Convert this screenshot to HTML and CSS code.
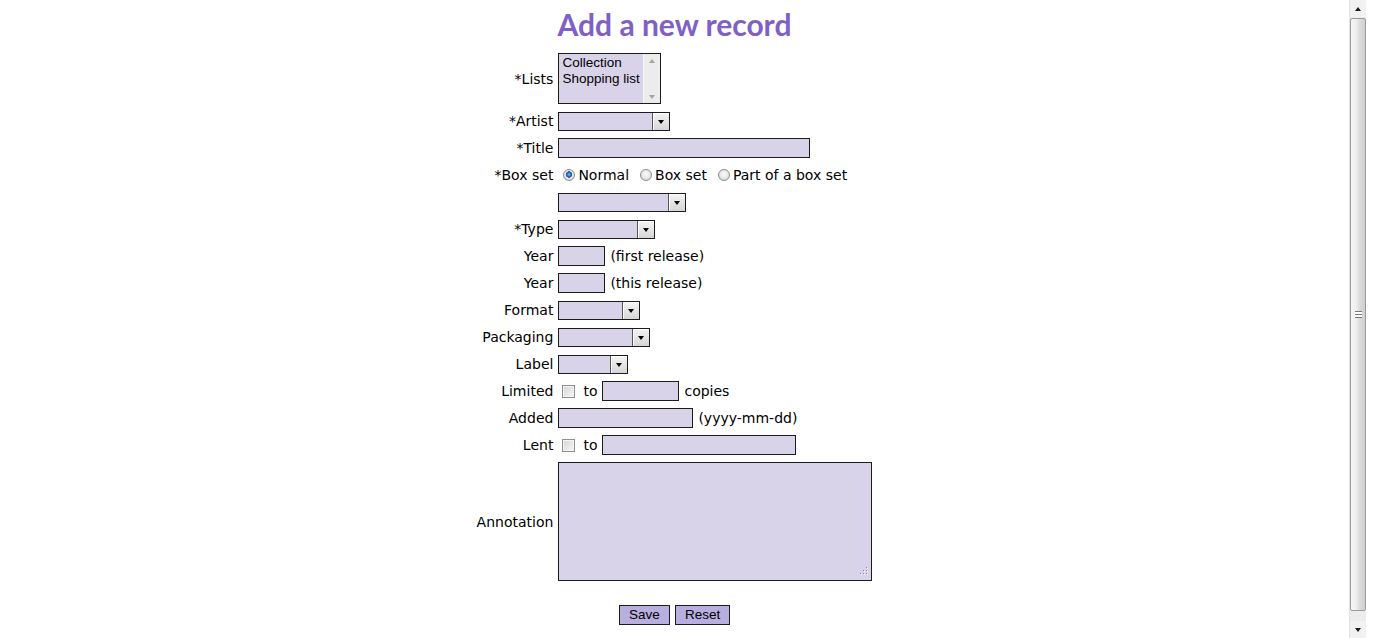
FILE: index.html
```html
<!DOCTYPE html>
<html lang="en">
<head>
<meta charset="utf-8">
<title>Add a new record</title>
<link rel="stylesheet" href="styles.css">
</head>
<body>
<div class="page">
  <main class="main">
    <h1 class="title">Add a new record</h1>
    <form class="form">
      <div class="lbl">*Lists</div>
      <div class="field">
        <div class="listbox">
          <div class="options">
            <div class="opt">Collection</div>
            <div class="opt">Shopping list</div>
          </div>
          <div class="lb-scroll">
            <span class="lb-up"></span>
            <span class="lb-down"></span>
          </div>
        </div>
      </div>

      <div class="lbl">*Artist</div>
      <div class="field"><span class="sel w-artist"><span class="drop"></span></span></div>

      <div class="lbl">*Title</div>
      <div class="field"><input class="inp w-title" type="text"></div>

      <div class="lbl">*Box set</div>
      <div class="field radios">
        <label class="rad"><input type="radio" name="box" checked>Normal</label>
        <label class="rad"><input type="radio" name="box">Box set</label>
        <label class="rad"><input type="radio" name="box">Part of a box set</label>
      </div>

      <div class="lbl"></div>
      <div class="field"><span class="sel w-boxset"><span class="drop"></span></span></div>

      <div class="lbl">*Type</div>
      <div class="field"><span class="sel w-type"><span class="drop"></span></span></div>

      <div class="lbl">Year</div>
      <div class="field"><input class="inp w-year" type="text"><span>(first release)</span></div>

      <div class="lbl">Year</div>
      <div class="field"><input class="inp w-year" type="text"><span>(this release)</span></div>

      <div class="lbl">Format</div>
      <div class="field"><span class="sel w-format"><span class="drop"></span></span></div>

      <div class="lbl">Packaging</div>
      <div class="field"><span class="sel w-pack"><span class="drop"></span></span></div>

      <div class="lbl">Label</div>
      <div class="field"><span class="sel w-label"><span class="drop"></span></span></div>

      <div class="lbl">Limited</div>
      <div class="field"><input class="chk" type="checkbox"><span>to</span><input class="inp w-limited" type="text"><span>copies</span></div>

      <div class="lbl">Added</div>
      <div class="field"><input class="inp w-added" type="text"><span>(yyyy-mm-dd)</span></div>

      <div class="lbl">Lent</div>
      <div class="field"><input class="chk" type="checkbox"><span>to</span><input class="inp w-lent" type="text"></div>

      <div class="lbl">Annotation</div>
      <div class="field">
        <span class="ta-wrap">
          <textarea class="ta"></textarea>
          <svg class="grip" width="12" height="12" viewBox="0 0 12 12">
            <rect x="9" y="1" width="1" height="1" fill="#8f8d9c"/>
            <rect x="10" y="2" width="1" height="1" fill="#fff"/>
            <rect x="6" y="4" width="1" height="1" fill="#8f8d9c"/>
            <rect x="9" y="4" width="1" height="1" fill="#8f8d9c"/>
            <rect x="7" y="5" width="1" height="1" fill="#fff"/>
            <rect x="10" y="5" width="1" height="1" fill="#fff"/>
            <rect x="3" y="7" width="1" height="1" fill="#8f8d9c"/>
            <rect x="6" y="7" width="1" height="1" fill="#8f8d9c"/>
            <rect x="9" y="7" width="1" height="1" fill="#8f8d9c"/>
            <rect x="4" y="8" width="1" height="1" fill="#fff"/>
            <rect x="7" y="8" width="1" height="1" fill="#fff"/>
            <rect x="10" y="8" width="1" height="1" fill="#fff"/>
          </svg>
        </span>
      </div>

      <div class="actions">
        <button class="btn" type="button">Save</button>
        <button class="btn" type="button">Reset</button>
      </div>
    </form>
  </main>
  <div class="scrollbar" aria-hidden="true">
    <span class="sb-btn"><span class="tri-up"></span></span>
    <span class="sb-thumb"><span class="sb-grip"></span></span>
    <span class="sb-btn"><span class="tri-down"></span></span>
  </div>
</div>
</body>
</html>
```

FILE: styles.css
```css
html, body {
  margin: 0;
  padding: 0;
  height: 100%;
  overflow: hidden;
  background: #fff;
}

body {
  font-family: "DejaVu Sans", Verdana, sans-serif;
  font-size: 14px;
  color: #000;
}

.page {
  display: flex;
  height: 100vh;
}

.main {
  flex: 1;
  min-width: 0;
}

.title {
  margin: 6px 0 11px;
  line-height: 36px;
  font-family: "Lato", "DejaVu Sans", sans-serif;
  font-weight: 700;
  font-size: 30px;
  color: #7e60c6;
  text-align: center;
}

.form {
  display: grid;
  grid-template-columns: max-content max-content;
  justify-content: center;
  align-items: center;
  column-gap: 5px;
  row-gap: 7px;
  margin: 0;
}

.lbl {
  text-align: right;
  line-height: 20px;
}

.field {
  display: flex;
  align-items: center;
  gap: 5px;
  min-height: 20px;
  line-height: 20px;
}

/* list box */
.listbox {
  box-sizing: border-box;
  width: 103px;
  height: 51px;
  border: 1px solid #1c1c1c;
  background: #d9d3ea;
  display: flex;
}

.options {
  flex: 1;
  padding: 1px 3px;
  font-family: "Liberation Sans", Arial, sans-serif;
  font-size: 13.5px;
  line-height: 16px;
  white-space: nowrap;
}

.lb-scroll {
  width: 17px;
  background: #ececec;
  border-left: 1px solid #f6f6f6;
  display: flex;
  flex-direction: column;
  justify-content: space-between;
  align-items: center;
  padding: 5px 0 4px;
  box-sizing: border-box;
}

.lb-up {
  width: 0;
  height: 0;
  border-left: 3.5px solid transparent;
  border-right: 3.5px solid transparent;
  border-bottom: 4px solid #a4a4a4;
}

.lb-down {
  width: 0;
  height: 0;
  border-left: 3.5px solid transparent;
  border-right: 3.5px solid transparent;
  border-top: 4px solid #a4a4a4;
}

/* select lookalike */
.sel {
  box-sizing: border-box;
  display: flex;
  justify-content: flex-end;
  height: 19px;
  border: 1px solid #1c1c1c;
  background: #d9d3ea;
}

.drop {
  box-sizing: border-box;
  width: 17px;
  height: 100%;
  border-left: 1px solid #555;
  background: linear-gradient(#f4f4f4, #d6d6d6);
  box-shadow: inset 1px 1px 0 #fff;
  display: flex;
  align-items: center;
  justify-content: center;
}

.drop::after {
  content: "";
  width: 0;
  height: 0;
  border-left: 3.5px solid transparent;
  border-right: 3.5px solid transparent;
  border-top: 4px solid #000;
  margin-top: 1px;
}

.w-artist { width: 112px; }
.w-boxset { width: 128px; }
.w-type { width: 97px; }
.w-format { width: 82px; }
.w-pack { width: 92px; }
.w-label { width: 70px; }

/* text inputs */
.inp {
  box-sizing: border-box;
  height: 20px;
  margin: 0;
  padding: 0 2px;
  border: 1px solid #1c1c1c;
  background: #d9d3ea;
  font: 13px "Liberation Sans", Arial, sans-serif;
  outline: none;
}

.w-title { width: 252px; }
.w-year { width: 47px; }
.w-limited { width: 77px; }
.w-added { width: 135px; }
.w-lent { width: 194px; }

/* radios */
.radios {
  gap: 6px;
}

.rad {
  display: inline-flex;
  align-items: center;
  gap: 3px;
}

.rad input {
  -webkit-appearance: none;
  appearance: none;
  box-sizing: border-box;
  width: 12px;
  height: 12px;
  margin: 0 0 0 5px;
  border-radius: 50%;
  border: 1px solid #8c8c8c;
  background: radial-gradient(circle at 50% 40%, #fbfbfb 0, #e4e4e4 60%, #cfcfcf 100%);
}

.rad input:checked {
  background:
    radial-gradient(circle at 50% 45%, #7fc0f4 0, #2f7fd6 1.6px, #1b4f9a 3px, transparent 3.4px),
    radial-gradient(circle at 50% 40%, #fbfbfb 0, #e4e4e4 60%, #cfcfcf 100%);
}

/* checkboxes */
.chk {
  -webkit-appearance: none;
  appearance: none;
  box-sizing: border-box;
  width: 13px;
  height: 13px;
  margin: 0 3px 0 4px;
  border: 1px solid #8e8f8f;
  background: linear-gradient(135deg, #d5d5d5, #f7f7f7);
  box-shadow: inset 0 0 0 1px #f4f4f4;
}

/* textarea */
.ta-wrap {
  position: relative;
  display: block;
  width: 314px;
  height: 119px;
}

.ta {
  box-sizing: border-box;
  display: block;
  width: 100%;
  height: 100%;
  margin: 0;
  border: 1px solid #1c1c1c;
  background: #d9d3ea;
  resize: none;
  outline: none;
}

.grip {
  position: absolute;
  right: 3px;
  bottom: 3px;
}

/* buttons */
.actions {
  grid-column: 1 / -1;
  justify-self: center;
  display: flex;
  gap: 5px;
  margin-top: 17px;
}

.btn {
  box-sizing: border-box;
  height: 20px;
  padding: 0 9px;
  margin: 0;
  border: 1px solid #1c1c1c;
  border-radius: 0;
  background: #b9aee0;
  color: #000;
  font: 13.5px "Liberation Sans", Arial, sans-serif;
  line-height: 18px;
}

.btn:first-child { width: 51px; }
.btn:last-child { width: 55px; }

/* fake page scrollbar */
.scrollbar {
  width: 17px;
  margin-right: 8px;
  display: flex;
  flex-direction: column;
  background: #ececec;
  border-left: 1px solid #e2e2e2;
  box-sizing: border-box;
}

.sb-btn {
  height: 17px;
  flex: none;
  display: flex;
  align-items: center;
  justify-content: center;
  background: #f2f2f2;
}

.tri-up {
  width: 0;
  height: 0;
  border-left: 3.5px solid transparent;
  border-right: 3.5px solid transparent;
  border-bottom: 4px solid #1a1a1a;
}

.tri-down {
  width: 0;
  height: 0;
  border-left: 3.5px solid transparent;
  border-right: 3.5px solid transparent;
  border-top: 4px solid #1a1a1a;
}

.sb-thumb {
  flex: 1;
  margin: 1px 0 10px;
  box-sizing: border-box;
  border: 1px solid #9b9b9b;
  border-radius: 2px;
  background: linear-gradient(90deg, #f6f6f6 0, #ededed 40%, #dcdcdc 60%, #cfcfcf 100%);
  display: flex;
  align-items: center;
  justify-content: center;
}

.sb-grip {
  width: 7px;
  height: 7px;
  background: repeating-linear-gradient(#777 0 1px, #fff 1px 3px);
}
```
